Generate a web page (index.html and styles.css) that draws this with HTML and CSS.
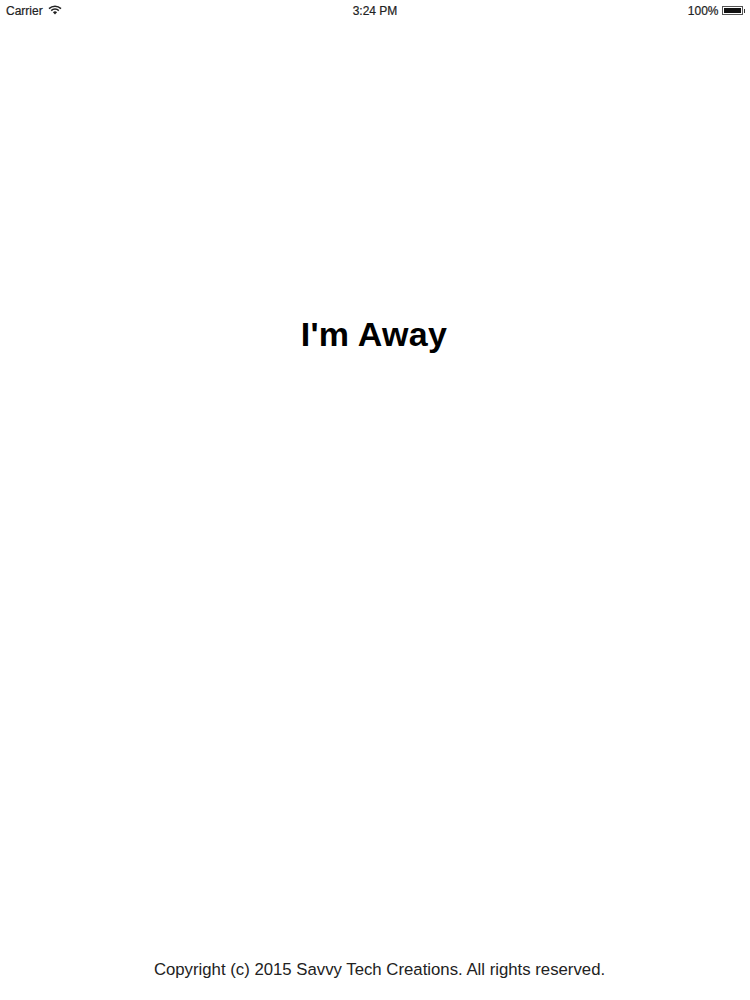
FILE: index.html
```html
<!DOCTYPE html>
<html lang="en">
<head>
    <meta charset="UTF-8">
    <title>I'm Away</title>
    <link rel="stylesheet" href="styles.css">
</head>
<body>

<div class="status-bar">
    <div class="status-left">
        <span>Carrier</span>
        <svg class="wifi" width="14" height="10" viewBox="0 0 14 10">
            <path d="M1 3.6 A8.6 8.6 0 0 1 13 3.6" fill="none" stroke="#222" stroke-width="1.5"/>
            <path d="M3.2 5.6 A5.5 5.5 0 0 1 10.8 5.6" fill="none" stroke="#222" stroke-width="1.5"/>
            <path d="M7 9.6 L4.9 7.3 A3 3 0 0 1 9.1 7.3 Z" fill="#222"/>
        </svg>
    </div>
    <div class="status-time">3:24 PM</div>
    <div class="status-right">
        <span>100%</span>
        <div class="battery">
            <div class="battery-level"></div>
        </div>
        <div class="battery-tip"></div>
    </div>
</div>

<main class="content">
    <h1 class="title">I'm Away</h1>
</main>

<footer class="copyright">Copyright (c) 2015 Savvy Tech Creations. All rights reserved.</footer>

</body>
</html>
```

FILE: styles.css
```css
body {
    font-family: "Liberation Sans", Arial, sans-serif;
    background-color: #fff;
    color: #111;
    margin: 0;
    height: 1000px;
    display: flex;
    flex-direction: column;
    overflow: hidden;
}
.status-bar {
    display: grid;
    grid-template-columns: 1fr auto 1fr;
    align-items: center;
    height: 21px;
    padding: 0 5px 0 6px;
    font-size: 12px;
    color: #222;
    -webkit-text-stroke: 0.2px #222;
}
.status-left {
    display: flex;
    align-items: center;
    gap: 5px;
}
.wifi {
    margin-top: -1px;
}
.status-time {
    margin-right: 1px;
}
.status-right {
    display: flex;
    align-items: center;
    justify-content: flex-end;
}
.battery {
    width: 21px;
    height: 9px;
    margin-left: 3px;
    padding: 1px;
    box-sizing: border-box;
    border: 1px solid #555;
}
.battery-level {
    height: 100%;
    background-color: #111;
}
.battery-tip {
    width: 1.5px;
    height: 4px;
    margin-left: 1px;
    background-color: #333;
}
.content {
    flex: 1;
    display: flex;
    justify-content: center;
    padding-top: 291px;
}
.title {
    margin: 0 2px 0 0;
    font-size: 34px;
    line-height: 44px;
    font-weight: bold;
    letter-spacing: 0.3px;
    color: #000;
}
.copyright {
    padding: 0 0 20px 9px;
    text-align: center;
    font-size: 16.75px;
    line-height: 20px;
    color: #222;
}
```
